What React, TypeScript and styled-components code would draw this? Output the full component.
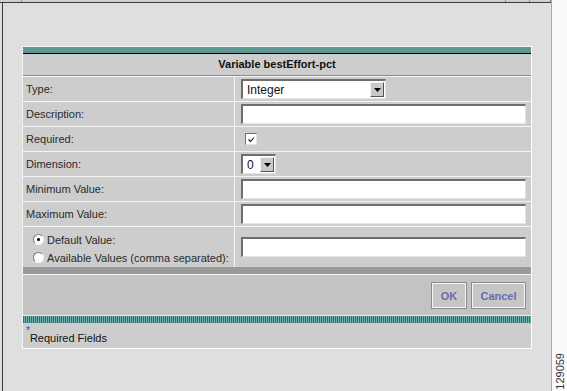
import React from "react";
import styled, { createGlobalStyle } from "styled-components";

const GlobalStyle = createGlobalStyle`
    html, body {
        margin: 0;
        padding: 0;
        background: #fafafa;
    }
    body {
        font-family: "Liberation Sans", Arial, sans-serif;
        font-size: 11px;
        color: #222;
    }
`;

const Screen = styled.div`
    display: flex;
    width: 567px;
    height: 391px;
    overflow: hidden;
`;

const Main = styled.div`
    display: flex;
    flex-direction: column;
    width: 552px;
    background: #dfdfdf;
    border-right: 1px solid #a9a9a9;
    box-sizing: border-box;
`;

const TopStrip = styled.div`
    display: flex;
    height: 2px;
    background: #cfcfcf;
    border-bottom: 1px solid #3c3c3c;
`;

const TopCell = styled.div<{ $w?: number }>`
    ${(p) => (p.$w ? `width: ${p.$w}px;` : "flex: 1;")}
    border-right: 1px solid #8c8c8c;
`;

const Body = styled.div`
    flex: 1;
    margin-left: 2px;
    border-left: 1px solid #3c3c3c;
    padding: 43px 0 0 19px;
`;

const Panel = styled.div`
    width: 510px;
    box-sizing: border-box;
    border-left: 1px solid #f2f2f2;
    border-right: 1px solid #fff;
    border-bottom: 1px solid #fff;
`;

const TealBar = styled.div`
    height: 6px;
    background: #5f9893;
    border-top: 1px solid #eef7f6;
    border-bottom: 1px solid #000;
`;

const TitleRow = styled.div`
    height: 21px;
    background: #cdcdcd;
    font-weight: bold;
    text-align: center;
    line-height: 21px;
    color: #111;
    border-bottom: 1px solid #8a8a8a;
`;

const Row = styled.div<{ $h?: number }>`
    display: grid;
    grid-template-columns: 212px 1fr;
    height: ${(p) => p.$h ?? 24}px;
    background: #cdcdcd;
    border-top: 1px solid #f4f4f4;
`;

const LabelCell = styled.div`
    display: flex;
    align-items: center;
    padding-left: 3px;
    border-right: 1px solid #f4f4f4;
    color: #2a2a2a;
`;

const RadioCell = styled.div`
    display: flex;
    flex-direction: column;
    justify-content: center;
    gap: 5px;
    padding: 3px 0 0 10px;
    border-right: 1px solid #f4f4f4;
    color: #2a2a2a;
`;

const FieldCell = styled.div`
    display: flex;
    align-items: center;
    padding: 0 5px 0 6px;
`;

const TextInput = styled.div`
    width: 100%;
    height: 20px;
    box-sizing: border-box;
    background: #fff;
    border-top: 2px solid #6e6e6e;
    border-left: 2px solid #6e6e6e;
    border-bottom: 1px solid #e4e4e4;
    border-right: 1px solid #e4e4e4;
`;

const SelectBox = styled.div<{ $w: number }>`
    display: flex;
    align-items: center;
    width: ${(p) => p.$w}px;
    height: 20px;
    box-sizing: border-box;
    background: #fff;
    border-top: 2px solid #6e6e6e;
    border-left: 2px solid #6e6e6e;
    border-bottom: 1px solid #e4e4e4;
    border-right: 1px solid #e4e4e4;
`;

const SelectValue = styled.span`
    flex: 1;
    padding-left: 4px;
    font-size: 12px;
    color: #111;
`;

const ArrowButton = styled.div`
    display: flex;
    align-items: center;
    justify-content: center;
    width: 14px;
    height: 15px;
    margin-right: 1px;
    box-sizing: border-box;
    background: #c9c9c9;
    border-top: 1px solid #f2f2f2;
    border-left: 1px solid #f2f2f2;
    border-bottom: 1px solid #555;
    border-right: 1px solid #555;
`;

const CheckBox = styled.div`
    display: flex;
    align-items: center;
    justify-content: center;
    width: 12px;
    height: 12px;
    margin-left: 4px;
    box-sizing: border-box;
    background: #fff;
    border-top: 1px solid #6e6e6e;
    border-left: 1px solid #6e6e6e;
    border-bottom: 1px solid #e4e4e4;
    border-right: 1px solid #e4e4e4;
`;

const RadioLine = styled.label`
    display: flex;
    align-items: center;
    gap: 3px;
    height: 13px;
`;

const Radio = styled.span<{ $on?: boolean }>`
    position: relative;
    width: 11px;
    height: 11px;
    box-sizing: border-box;
    border-radius: 50%;
    background: #fdfdfd;
    border: 1px solid;
    border-color: #7a7a7a #f4f4f4 #f4f4f4 #7a7a7a;

    &::after {
        content: "";
        display: ${(p) => (p.$on ? "block" : "none")};
        position: absolute;
        left: 3px;
        top: 3px;
        width: 3px;
        height: 3px;
        border-radius: 50%;
        background: #000;
    }
`;

const DarkBar = styled.div`
    height: 7px;
    background: #9a9a9a;
    border-bottom: 1px solid #f4f4f4;
`;

const ButtonBar = styled.div`
    display: flex;
    justify-content: flex-end;
    align-items: center;
    gap: 4px;
    height: 40px;
    padding-right: 5px;
    background: #c3c3c3;
    border-bottom: 1px solid #e6eeee;
`;

const Button = styled.button<{ $w: number }>`
    width: ${(p) => p.$w}px;
    height: 27px;
    padding: 0;
    margin-top: 1px;
    font-family: "Liberation Sans", Arial, sans-serif;
    font-size: 11px;
    font-weight: bold;
    color: #6a6aae;
    background: #c6c6c6;
    border: 1px solid #8a8a8a;
    box-shadow: inset 0 0 0 1px #f6f6f6;
`;

const DottedBar = styled.div`
    height: 7px;
    background: repeating-linear-gradient(90deg, #1e7c77 0 1px, #6eaaa6 1px 2px);
`;

const Footer = styled.div`
    display: flex;
    align-items: flex-start;
    height: 25px;
    padding: 3px 0 0 3px;
    box-sizing: border-box;
    background: #cdcdcd;
    color: #111;
`;

const Star = styled.span`
    font-size: 10px;
    color: #3a3acc;
    line-height: 10px;
`;

const FooterText = styled.span`
    margin-top: 6px;
    font-size: 11px;
`;

const SideStrip = styled.div`
    display: flex;
    flex-direction: column;
    justify-content: flex-end;
    align-items: center;
    flex: 1;
    background: #fafafa;
    padding-bottom: 1px;
`;

const FigureNumber = styled.span`
    writing-mode: vertical-rl;
    transform: rotate(180deg);
    font-size: 11px;
    color: #333;
`;

const DownArrow = () => (
    <svg width="7" height="4" viewBox="0 0 7 4">
        <path d="M0 0h7L3.5 4z" fill="#000" />
    </svg>
);

const Tick = () => (
    <svg width="8" height="7" viewBox="0 0 8 7">
        <path d="M1.5 3.5l2 2L7 1.5" stroke="#111" strokeWidth="1.1" fill="none" />
    </svg>
);

const Select = ({ value, width }: { value: string; width: number }) => (
    <SelectBox $w={width}>
        <SelectValue>{value}</SelectValue>
        <ArrowButton>
            <DownArrow />
        </ArrowButton>
    </SelectBox>
);

const FieldRow = ({ label, children }: { label: string; children: React.ReactNode }) => (
    <Row>
        <LabelCell>{label}</LabelCell>
        <FieldCell>{children}</FieldCell>
    </Row>
);

const App = () => (
    <>
        <GlobalStyle />
        <Screen>
            <Main>
                <TopStrip>
                    <TopCell $w={21} />
                    <TopCell $w={483} />
                    <TopCell $w={23} />
                    <TopCell />
                </TopStrip>
                <Body>
                    <Panel>
                        <TealBar />
                        <TitleRow>Variable bestEffort-pct</TitleRow>
                        <FieldRow label="Type:">
                            <Select value="Integer" width={145} />
                        </FieldRow>
                        <FieldRow label="Description:">
                            <TextInput />
                        </FieldRow>
                        <FieldRow label="Required:">
                            <CheckBox>
                                <Tick />
                            </CheckBox>
                        </FieldRow>
                        <FieldRow label="Dimension:">
                            <Select value="0" width={35} />
                        </FieldRow>
                        <FieldRow label="Minimum Value:">
                            <TextInput />
                        </FieldRow>
                        <FieldRow label="Maximum Value:">
                            <TextInput />
                        </FieldRow>
                        <Row $h={40}>
                            <RadioCell>
                                <RadioLine>
                                    <Radio $on />
                                    Default Value:
                                </RadioLine>
                                <RadioLine>
                                    <Radio />
                                    Available Values (comma separated):
                                </RadioLine>
                            </RadioCell>
                            <FieldCell>
                                <TextInput />
                            </FieldCell>
                        </Row>
                        <DarkBar />
                        <ButtonBar>
                            <Button $w={36}>OK</Button>
                            <Button $w={55}>Cancel</Button>
                        </ButtonBar>
                        <DottedBar />
                        <Footer>
                            <Star>*</Star>
                            <FooterText>Required Fields</FooterText>
                        </Footer>
                    </Panel>
                </Body>
            </Main>
            <SideStrip>
                <FigureNumber>129059</FigureNumber>
            </SideStrip>
        </Screen>
    </>
);

export default App;
